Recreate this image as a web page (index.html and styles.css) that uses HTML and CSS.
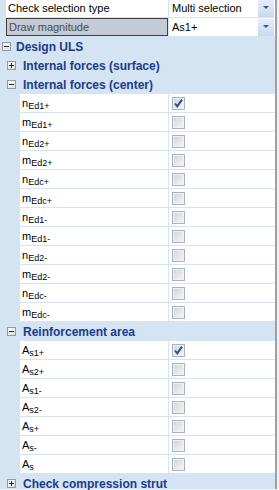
FILE: index.html
```html
<!DOCTYPE html>
<html lang="en">
<head>
    <meta charset="UTF-8">
    <meta name="viewport" content="width=device-width, initial-scale=1.0">
    <title>Check settings</title>
    <link rel="stylesheet" href="styles.css">
</head>
<body>
    <div class="grid">
        <div class="row first">
            <div class="gutter small"></div>
            <div class="name wide">Check selection type</div>
            <div class="value">
                <span class="text">Multi selection</span>
                <span class="drop"><span class="arrow"></span></span>
            </div>
        </div>
        <div class="row">
            <div class="gutter small"></div>
            <div class="name wide selected">Draw magnitude</div>
            <div class="value">
                <span class="text">As1+</span>
                <span class="drop"><span class="arrow"></span></span>
            </div>
        </div>

        <div class="row category">
            <span class="toggle level0 open"></span>
            <span class="title">Design ULS</span>
        </div>
        <div class="row category">
            <span class="toggle level1"></span>
            <span class="title">Internal forces (surface)</span>
        </div>
        <div class="row category">
            <span class="toggle level1 open"></span>
            <span class="title">Internal forces (center)</span>
        </div>

        <div id="centerItems"></div>

        <div class="row category">
            <span class="toggle level1 open"></span>
            <span class="title">Reinforcement area</span>
        </div>

        <div id="areaItems"></div>

        <div class="row category">
            <span class="toggle level1"></span>
            <span class="title">Check compression strut</span>
        </div>
    </div>

    <script>
        let centerItems = [
            ['n', 'Ed1+', true], ['m', 'Ed1+'], ['n', 'Ed2+'], ['m', 'Ed2+'],
            ['n', 'Edc+'], ['m', 'Edc+'], ['n', 'Ed1-'], ['m', 'Ed1-'],
            ['n', 'Ed2-'], ['m', 'Ed2-'], ['n', 'Edc-'], ['m', 'Edc-']
        ];
        let areaItems = [
            ['A', 's1+', true], ['A', 's2+'], ['A', 's1-'], ['A', 's2-'],
            ['A', 's+'], ['A', 's-'], ['A', 's']
        ];

        function fillItems(id, items) {
            let box = document.getElementById(id);
            items.forEach(function (item) {
                let row = document.createElement('div');
                row.className = 'row';
                let mark = item[2]
                    ? '<svg width="11" height="11" viewBox="0 0 11 11"><path d="M2 5.5 L4.3 8.4 L9 1.6" fill="none" stroke="#2f4f86" stroke-width="2"/></svg>'
                    : '';
                row.innerHTML = `
                    <div class="gutter"></div>
                    <div class="name">${item[0]}<span class="sub">${item[1]}</span></div>
                    <div class="value"><span class="check">${mark}</span></div>
                `;
                box.appendChild(row);
            });
        }

        fillItems('centerItems', centerItems);
        fillItems('areaItems', areaItems);
    </script>
</body>
</html>
```

FILE: styles.css
```css
html, body {
    margin: 0;
    padding: 0;
}
body {
    width: 279px;
    height: 490px;
    overflow: hidden;
    background: #f0f0f0;
    font-family: "Liberation Sans", Arial, sans-serif;
    font-size: 11px;
    color: #000;
}
.grid {
    width: 275px;
    height: 490px;
    background: #d5e4f2;
    border-right: 2px solid #a0a0a0;
}
.row {
    display: flex;
    height: 18px;
    margin-bottom: 1px;
    line-height: 18px;
}
.row.first {
    margin-top: -1px;
}
.gutter {
    width: 20px;
    flex: 0 0 auto;
}
.gutter.small {
    width: 6px;
}
.name {
    width: 148px;
    flex: 0 0 auto;
    background: white;
    padding-left: 2px;
    box-sizing: border-box;
    white-space: nowrap;
}
.name.wide {
    width: 162px;
}
.name.selected {
    background: #c2cbd6;
    border: 1px solid #3f3f3f;
    line-height: 16px;
    padding-left: 2px;
    color: #4a4a4a;
}
.value {
    flex: 1;
    margin-left: 1px;
    background: white;
    display: flex;
    align-items: center;
    padding-left: 3px;
}
.value .text {
    flex: 1;
}
.drop {
    width: 16px;
    height: 17px;
    margin-right: 1px;
    background: linear-gradient(#e4edf9, #c8daf1);
    display: flex;
    align-items: center;
    justify-content: center;
}
.arrow {
    width: 0;
    height: 0;
    border-left: 3px solid transparent;
    border-right: 3px solid transparent;
    border-top: 3px solid #3d5680;
    margin-top: -1px;
}
.sub {
    font-size: 9px;
    vertical-align: -2px;
    line-height: 1;
}
.check {
    width: 13px;
    height: 13px;
    box-sizing: border-box;
    border: 1px solid #a5b3c9;
    background: linear-gradient(135deg, #d2d2d2, #f7f7f7);
    box-shadow: inset 0 0 0 1px #eef1f5;
    display: flex;
    align-items: center;
    justify-content: center;
}
.category {
    align-items: center;
}
.category .title {
    font-weight: bold;
    font-size: 12px;
    color: #1b3b8c;
    white-space: nowrap;
    padding-top: 1px;
}
.toggle {
    width: 9px;
    height: 9px;
    box-sizing: border-box;
    border: 1px solid #919aa8;
    background: linear-gradient(135deg, #ffffff, #dcdcdc);
    position: relative;
    flex: 0 0 auto;
}
.toggle::before,
.toggle::after {
    content: "";
    position: absolute;
    background: #2a2a2a;
}
.toggle::before {
    left: 1px;
    top: 3px;
    width: 5px;
    height: 1px;
}
.toggle::after {
    left: 3px;
    top: 1px;
    width: 1px;
    height: 5px;
}
.toggle.open::after {
    display: none;
}
.toggle.level0 {
    margin-left: 2px;
    margin-right: 5px;
}
.toggle.level1 {
    margin-left: 7px;
    margin-right: 7px;
}
```
